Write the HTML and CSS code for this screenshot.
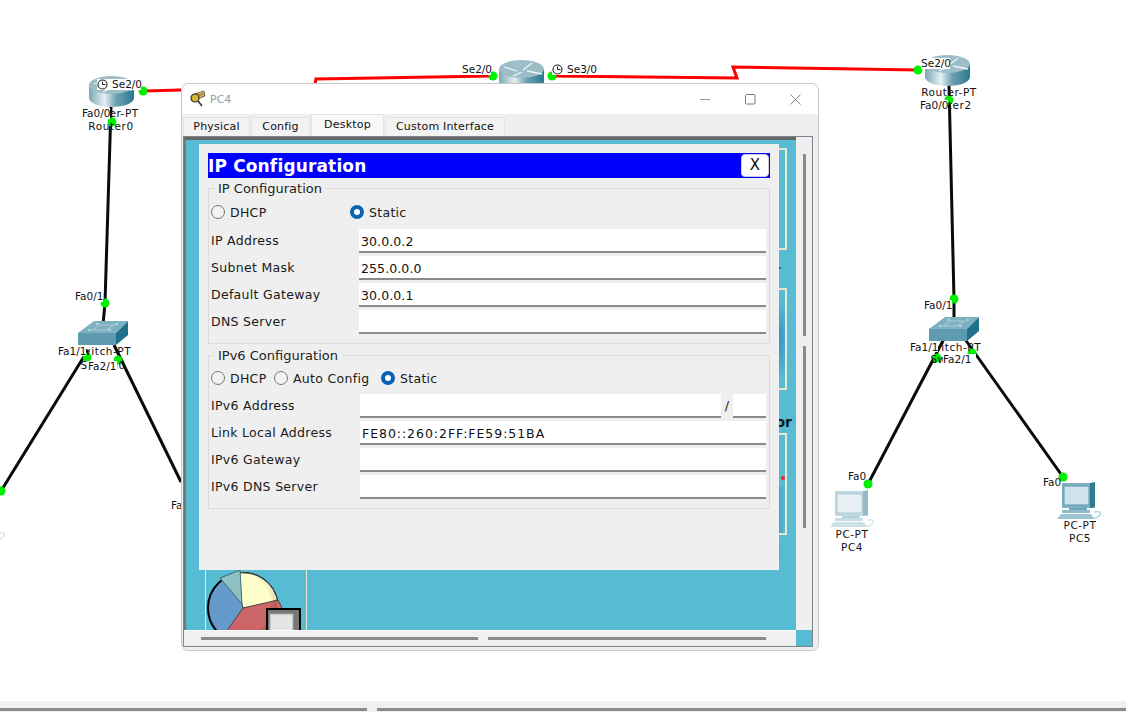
FILE: index.html
```html
<!DOCTYPE html>
<html lang="en">
<head>
<meta charset="utf-8">
<title>PC4 IP Configuration</title>
<link rel="stylesheet" href="styles.css">
</head>
<body>
<div class="app">
  <main class="canvas">
    <svg class="topology" width="1126" height="701" viewBox="0 0 1126 701">
      <defs>
        <linearGradient id="routerBody" x1="0" x2="1" y1="0" y2="0">
          <stop offset="0" stop-color="#7ea6b2"/>
          <stop offset=".35" stop-color="#e4f0f3"/>
          <stop offset=".6" stop-color="#6ea2b2"/>
          <stop offset="1" stop-color="#2c788e"/>
        </linearGradient>
        <symbol id="router" viewBox="0 0 45 31">
          <path d="M0 9v13c0 5 10 9 22.500 9S45 27 45 22V9z" fill="url(#routerBody)"/>
          <ellipse cx="22.500" cy="9" rx="22.500" ry="9" fill="#9dbdc7"/>
          <path d="M5 7l13 4M24 10l9-7M14 16l9-4M28 11l15 3" stroke="#eef6f8" stroke-width="1.300" fill="none"/>
        </symbol>
        <symbol id="switch" viewBox="0 0 50 24">
          <path d="M0 12L16 0h34L38 12z" fill="#7db0c0"/>
          <path d="M0 12h38v12H0z" fill="#5e9ab0"/>
          <path d="M38 12L50 0v14L38 24z" fill="#1f7088"/>
          <path d="M14 9l8-5h14l-8 5z" stroke="#a9cdd8" stroke-width="1" fill="none"/>
          <path d="M10 9h3M18 3h3M37 3h3M30 9h3" stroke="#e4f0f4" stroke-width="1.200" fill="none"/>
        </symbol>
        <symbol id="pc" viewBox="0 0 44 38">
          <path d="M5 1h33v25H5z" fill="#7fb0c4"/>
          <path d="M33 1l5-1v25l-5 1z" fill="#2f7a90"/>
          <path d="M7 4h25v19H7z" fill="#cfe3ec" stroke="#5f97ad"/>
          <path d="M12 26h18v2H12z" fill="#6fa4b8"/>
          <path d="M5 28h28v3H5z" fill="#8fbacb"/>
          <path d="M4 32h30l3 5H0z" fill="#9cc3d2"/>
          <path d="M37 30c5-1 7 0 6 3l-4 3h-3" stroke="#b7d2dc" stroke-width="1.500" fill="none"/>
        </symbol>
        <symbol id="clock" viewBox="0 0 11 11">
          <circle cx="5.500" cy="5.500" r="4.500" fill="#fff" stroke="#222" stroke-width="1.100"/>
          <path d="M5.500 2.500v3h3" stroke="#222" stroke-width="1" fill="none"/>
        </symbol>
      </defs>

      <g class="serial">
        <path d="M143 91L181 90"/>
        <path d="M315 84L316 79L492 76"/>
        <path d="M552 76L737 78L733 67L918 70"/>
      </g>
      <g class="copper">
        <path d="M111 107L105 303L103 325"/>
        <path d="M88 350L1 491"/>
        <path d="M114 345L181 482"/>
        <path d="M949 85L954 299L954 320"/>
        <path d="M946 335L868 484"/>
        <path d="M962 335L1063 477"/>
      </g>

      <use href="#router" x="89" y="76" width="45" height="31"/>
      <use href="#router" x="499" y="60" width="45" height="31"/>
      <use href="#router" x="925" y="55" width="45" height="31"/>
      <use href="#switch" x="78" y="321" width="50" height="24"/>
      <use href="#switch" x="929" y="317" width="50" height="24"/>
      <use class="pale" href="#pc" x="830" y="490" width="44" height="38"/>
      <use href="#pc" x="1057" y="482" width="44" height="38"/>
      <use class="pale" href="#pc" x="-39" y="503" width="44" height="38"/>

      <g class="port">
        <circle cx="143" cy="91" r="4.500"/>
        <circle cx="112" cy="122" r="4.500"/>
        <circle cx="105" cy="303" r="4.500"/>
        <circle cx="87" cy="357" r="4.500"/>
        <circle cx="118" cy="360" r="4.500"/>
        <circle cx="1" cy="491" r="4.500"/>
        <circle cx="493" cy="76" r="4.500"/>
        <circle cx="552" cy="76" r="4.500"/>
        <circle cx="918" cy="70" r="4.500"/>
        <circle cx="949" cy="100" r="4.500"/>
        <circle cx="954" cy="299" r="4.500"/>
        <circle cx="937" cy="358" r="4.500"/>
        <circle cx="972" cy="353" r="4.500"/>
        <circle cx="868" cy="484" r="4.500"/>
        <circle cx="1063" cy="477" r="4.500"/>
      </g>

      <text class="name" x="111" y="117">Router-PT</text>
      <text class="name" x="111" y="130">Router0</text>
      <text class="name" x="103" y="355">Switch-PT</text>
      <text class="name" x="103" y="369">Switch0</text>
      <text class="name" x="949" y="96">Router-PT</text>
      <text class="name" x="949" y="109">Router2</text>
      <text class="name" x="953" y="351">Switch-PT</text>
      <text class="name" x="953" y="363">Switch1</text>
      <text class="name" x="852" y="538">PC-PT</text>
      <text class="name" x="852" y="551">PC4</text>
      <text class="name" x="1080" y="529">PC-PT</text>
      <text class="name" x="1080" y="542">PC5</text>

      <g class="tag-bg">
        <path d="M97 79h44v11H97z"/>
        <path d="M82 108h28v11H82z"/>
        <path d="M75 291h28v11H75z"/>
        <path d="M58 346h28v10H58z"/>
        <path d="M88 361h29v11H88z"/>
        <path d="M462 64h29v11H462z"/>
        <path d="M552 64h44v11H552z"/>
        <path d="M921 58h29v11H921z"/>
        <path d="M920 100h28v12H920z"/>
        <path d="M924 300h28v11H924z"/>
        <path d="M910 342h28v10H910z"/>
        <path d="M943 354h33v11H943z"/>
      </g>

      <text class="tag" x="112" y="88">Se2/0</text>
      <text class="tag" x="82" y="117">Fa0/0</text>
      <text class="tag" x="75" y="300">Fa0/1</text>
      <text class="tag" x="58" y="355">Fa1/1</text>
      <text class="tag" x="88" y="370">Fa2/1</text>
      <text class="tag" x="171" y="509">Fa0</text>
      <text class="tag" x="462" y="73">Se2/0</text>
      <text class="tag" x="567" y="73">Se3/0</text>
      <text class="tag" x="921" y="67">Se2/0</text>
      <text class="tag" x="920" y="109">Fa0/0</text>
      <text class="tag" x="924" y="309">Fa0/1</text>
      <text class="tag" x="910" y="351">Fa1/1</text>
      <text class="tag" x="943" y="363">Fa2/1</text>
      <text class="tag" x="848" y="480">Fa0</text>
      <text class="tag" x="1043" y="486">Fa0</text>

      <use href="#clock" x="97" y="79" width="11" height="11"/>
      <use href="#clock" x="552" y="64" width="11" height="11"/>
    </svg>

    <section class="window">
      <header class="titlebar">
        <svg class="app-icon" width="16" height="18" viewBox="0 0 16 18">
          <path d="M4 4l10-3 1 5-10 4z" fill="#b08a3c" stroke="#5d4a1e" stroke-width=".7"/>
          <path d="M8 4l6-2M9 7l5-2" stroke="#e6d49a" stroke-width=".8"/>
          <circle cx="5" cy="8" r="4" fill="#d8b52a" stroke="#333" stroke-width="1.200"/>
          <path d="M8 11l4 5" stroke="#333" stroke-width="1.600"/>
        </svg>
        <span class="window-title">PC4</span>
        <div class="controls">
          <svg width="11" height="11" viewBox="0 0 11 11"><path d="M0 5.500h10" stroke="#999" stroke-width="1"/></svg>
          <svg width="11" height="11" viewBox="0 0 11 11"><rect x=".5" y=".5" width="9.500" height="9.500" rx="1" fill="none" stroke="#777"/></svg>
          <svg width="11" height="11" viewBox="0 0 11 11"><path d="M.5.500l10 10M10.500.500l-10 10" stroke="#888" stroke-width="1"/></svg>
        </div>
      </header>

      <nav class="tabs">
        <span class="tab tab-physical">Physical</span>
        <span class="tab tab-config">Config</span>
        <span class="tab tab-active">Desktop</span>
        <span class="tab tab-custom">Custom Interface</span>
      </nav>

      <div class="frame">
        <div class="viewport">
          <div class="desk">
            <div class="tile tile-a">
              <div class="card"></div>
              <p class="caption caption-a">Web Browser</p>
            </div>
            <div class="tile tile-b">
              <div class="card card-glow"></div>
              <p class="caption caption-b">Traffic Generator</p>
            </div>
            <div class="tile tile-c">
              <div class="card card-glow-low"><i class="red-dot"></i></div>
              <p class="caption caption-c">Firewall</p>
            </div>
            <div class="card card-pie">
              <svg class="pie" width="100" height="72" viewBox="0 0 100 72">
                <defs>
                  <radialGradient id="pieShade" cx=".45" cy=".45" r=".6">
                    <stop offset=".75" stop-color="#000" stop-opacity="0"/>
                    <stop offset="1" stop-color="#000" stop-opacity=".25"/>
                  </radialGradient>
                </defs>
                <circle cx="37" cy="38" r="35" fill="#6699cc" stroke="#000" stroke-width="2"/>
                <path d="M37 38L28 4a35 35 0 0 1 44 30z" fill="#ffffcc" stroke="#444" stroke-width="1"/>
                <path d="M37 38L72 30a35 35 0 0 1-6 45H11z" fill="#cc6666" stroke="#444" stroke-width="1"/>
                <circle cx="37" cy="38" r="34" fill="url(#pieShade)"/>
                <path d="M14 8L34 0l2 34z" fill="#8fc0c4" stroke="#3f6a70"/>
                <rect x="61" y="39" width="33" height="34" fill="#777" stroke="#000" stroke-width="2"/>
                <rect x="64" y="44" width="23" height="30" fill="#e5e5e5" stroke="#aaa"/>
              </svg>
            </div>
          </div>

          <div class="dialog">
            <div class="dialog-head">
              <h1 class="dialog-title">IP Configuration</h1>
              <button class="close-btn" type="button">X</button>
            </div>

            <fieldset class="group">
              <legend>IP Configuration</legend>
              <div class="choices choices-v4">
                <label class="choice choice-wide"><i class="radio"></i>DHCP</label>
                <label class="choice"><i class="radio radio-on"></i>Static</label>
              </div>
              <div class="form form-v4">
                <span class="lbl">IP Address</span><div class="field">30.0.0.2</div>
                <span class="lbl">Subnet Mask</span><div class="field">255.0.0.0</div>
                <span class="lbl">Default Gateway</span><div class="field">30.0.0.1</div>
                <span class="lbl">DNS Server</span><div class="field"></div>
              </div>
            </fieldset>

            <fieldset class="group group-v6">
              <legend>IPv6 Configuration</legend>
              <div class="choices choices-v6">
                <label class="choice choice-dhcp"><i class="radio"></i>DHCP</label>
                <label class="choice choice-auto"><i class="radio"></i>Auto Config</label>
                <label class="choice"><i class="radio radio-on"></i>Static</label>
              </div>
              <div class="form form-v6">
                <span class="lbl">IPv6 Address</span>
                <div class="prefix-row"><div class="field"></div><span class="slash">/</span><div class="field"></div></div>
                <span class="lbl">Link Local Address</span><div class="field field-wide">FE80::260:2FF:FE59:51BA</div>
                <span class="lbl">IPv6 Gateway</span><div class="field"></div>
                <span class="lbl">IPv6 DNS Server</span><div class="field"></div>
              </div>
            </fieldset>
          </div>
        </div>

        <div class="vscroll"><i class="thumb-v thumb-v1"></i><i class="thumb-v thumb-v2"></i></div>
        <div class="hscroll"><i class="thumb-h thumb-h1"></i><i class="thumb-h thumb-h2"></i></div>
        <div class="corner"></div>
      </div>
    </section>
  </main>

  <footer class="strip">
    <i class="strip-track strip-track-a"></i>
    <i class="strip-track strip-track-b"></i>
  </footer>
</div>
</body>
</html>
```
FILE: styles.css
```css
* { box-sizing: border-box; }
html, body { margin: 0; height: 100%; background: #fff; overflow: hidden; }
body, button, legend, .tag, .name { font-family: "DejaVu Sans", "Liberation Sans", sans-serif; }

.app { display: flex; flex-direction: column; width: 1126px; height: 712px; }
.canvas { position: relative; flex: 1; overflow: hidden; }
.topology { position: absolute; left: 0; top: 0; }

.serial path { fill: none; stroke: #f00; stroke-width: 3; }
.copper path { fill: none; stroke: #0a0a0a; stroke-width: 3; }
.port circle { fill: #00f000; }
.tag-bg path { fill: #fff; }
.tag, .name { font-size: 10.5px; fill: #111; }
.name { text-anchor: middle; letter-spacing: .55px; }
.pale { opacity: .5; }

/* window */
.window {
  position: absolute; left: 181px; top: 83px; width: 638px; height: 568px;
  display: flex; flex-direction: column;
  background: #efefef; border: 1px solid #c8c8c8; border-radius: 7px; overflow: hidden;
  padding-bottom: 3px;
}
.titlebar { display: flex; align-items: center; height: 30px; flex: none; background: #fff; padding: 0 0 0 8px; }
.app-icon { margin-right: 4px; }
.window-title { font-size: 11px; color: #999; }
.controls { margin-left: auto; display: flex; gap: 34px; padding-right: 17px; }

.tabs { display: flex; align-items: flex-end; flex: none; height: 22px; padding-left: 1px; gap: 1px; font-size: 11px; letter-spacing: .2px; }
.tab { display: flex; align-items: center; justify-content: center; height: 19px; padding-bottom: 2px; color: #111; background: #f3f3f3; border: 1px solid #e2e2e2; border-bottom: 0; }
.tab-physical { width: 67px; }
.tab-config { width: 59px; }
.tab-active { width: 73px; height: 22px; background: #f8f8f8; padding-bottom: 2px; }
.tab-custom { width: 120px; }

.frame {
  flex: 1; min-height: 0; margin: 0 5px 0 1px;
  display: grid; grid-template-columns: 1fr 16px; grid-template-rows: 1fr 16px;
  border: 1px solid #7d868e;
  background: #f0f0f0;
}
.viewport {
  position: relative; overflow: hidden;
  background: #55bcd4;
  border-top: 3px solid #666;
  border-left: 2px solid #777;
}
.desk {
  display: grid;
  grid-template-columns: 102px 1fr 102px;
  grid-template-rows: 140px 145px 125px 1fr;
  height: 100%;
  padding: 8px 9px 0 19px;
}
.tile { grid-column: 3; }
.tile-a { grid-row: 1; }
.tile-b { grid-row: 2; }
.tile-c { grid-row: 3; }
.card { height: 102px; border: 2px solid #ece6d0; }
.tile .card { position: relative; }
.card-glow { background: radial-gradient(ellipse 14px 42px at 92% 50%, #2f8fc4, transparent); }
.card-glow-low { background: linear-gradient(90deg, transparent 70%, #3a95c4 90%, #55bcd4 100%) 0 52px / 100% 48px no-repeat; }
.red-dot { position: absolute; right: 0; top: 41px; width: 4px; height: 4px; border-radius: 50%; background: #f22; }
.caption { display: flex; justify-content: flex-end; margin: 0; white-space: nowrap; font-weight: bold; }
.caption-a { font-size: 13px; color: #1a5a80; margin: 12px 6px 0 0; }
.caption-b { font-size: 14px; color: #0a1a20; margin: 24px -5px 0 0; }
.caption-c { font-size: 13px; color: #0a2a50; margin: 10px 7px 0 0; }
.card-pie {
  grid-column: 1; grid-row: 4; height: 100px; padding-top: 12px;
  border-width: 0 1.500px; overflow: hidden;
}
.pie { display: block; }

/* dialog */
.dialog {
  position: absolute; left: 13px; top: 4px; width: 580px; height: 426px;
  background: #efefef; padding: 9px;
}
.dialog-head { display: flex; align-items: center; justify-content: space-between; height: 25px; background: #00f; padding-right: 1px; }
.dialog-title { margin: 2px 0 0; font-size: 17px; line-height: 23px; letter-spacing: .15px; font-weight: bold; color: #fff; }
.close-btn { width: 28px; height: 23px; padding: 0; border: 1px solid #ccd; border-radius: 4px; background: #fff; font-size: 15px; color: #111; line-height: 21px; }

.group { margin: 0; padding: 0 3px 0 2px; border: 1px solid #dcdcdc; min-width: 0; height: 166px; font-size: 12.500px; letter-spacing: .3px; color: #1a1a1a; }
.group-v6 { height: 164px; margin-top: 1px; }
.group legend { height: 20px; padding: 1px 4px 0; margin-left: 3px; font-size: 13px; line-height: 20px; letter-spacing: 0; color: #222; }
.choices { display: flex; align-items: center; height: 18px; margin-top: 5px; }
.choice { display: flex; align-items: center; gap: 5px; flex: none; }
.choice-wide { width: 139px; }
.choice-dhcp { width: 63px; }
.choice-auto { width: 107px; }
.choices-v6 { margin-top: 4px; }
.radio { display: block; width: 14px; height: 14px; border-radius: 50%; border: 1.500px solid #777; background: #f2f2f2; }
.radio-on { border: 4px solid #0a62b4; background: #fff; }

.form { display: grid; grid-template-columns: 148px 1fr; grid-auto-rows: 24px; row-gap: 3px; margin-top: 8px; align-items: center; }
.form-v6 { grid-template-columns: 149px 1fr; margin-top: 7px; }
.lbl { line-height: 24px; align-self: start; }
.field { height: 24px; background: #fff; border-bottom: 2px solid #8a8a8a; font-size: 12.500px; line-height: 26px; padding-left: 2px; color: #111; letter-spacing: .1px; }
.field-wide { letter-spacing: .95px; }
.prefix-row { display: grid; grid-template-columns: 361px 12px 1fr; }
.slash { text-align: center; font-size: 13px; line-height: 24px; }

/* scrollbars */
.vscroll { background: #efefef; position: relative; display: flex; flex-direction: column; align-items: center; padding-top: 17px; gap: 10px; }
.thumb-v { display: block; width: 3px; background: #8a8a8a; }
.thumb-v1 { height: 182px; }
.thumb-v2 { height: 182px; }
.hscroll { background: #f0f0f0; display: flex; align-items: center; gap: 10px; padding-left: 17px; border-top: 1px solid #fff; }
.thumb-h { display: block; height: 3px; background: #8a8a8a; }
.thumb-h1 { width: 277px; }
.thumb-h2 { width: 278px; }
.corner { background: #55bcd4; }

/* bottom strip */
.strip { flex: none; height: 11px; background: #f0f0f0; display: flex; gap: 10px; padding-top: 7px; }
.strip-track { display: block; height: 3px; background: #8a8a8a; }
.strip-track-a { width: 367px; }
.strip-track-b { flex: 1; }
```
